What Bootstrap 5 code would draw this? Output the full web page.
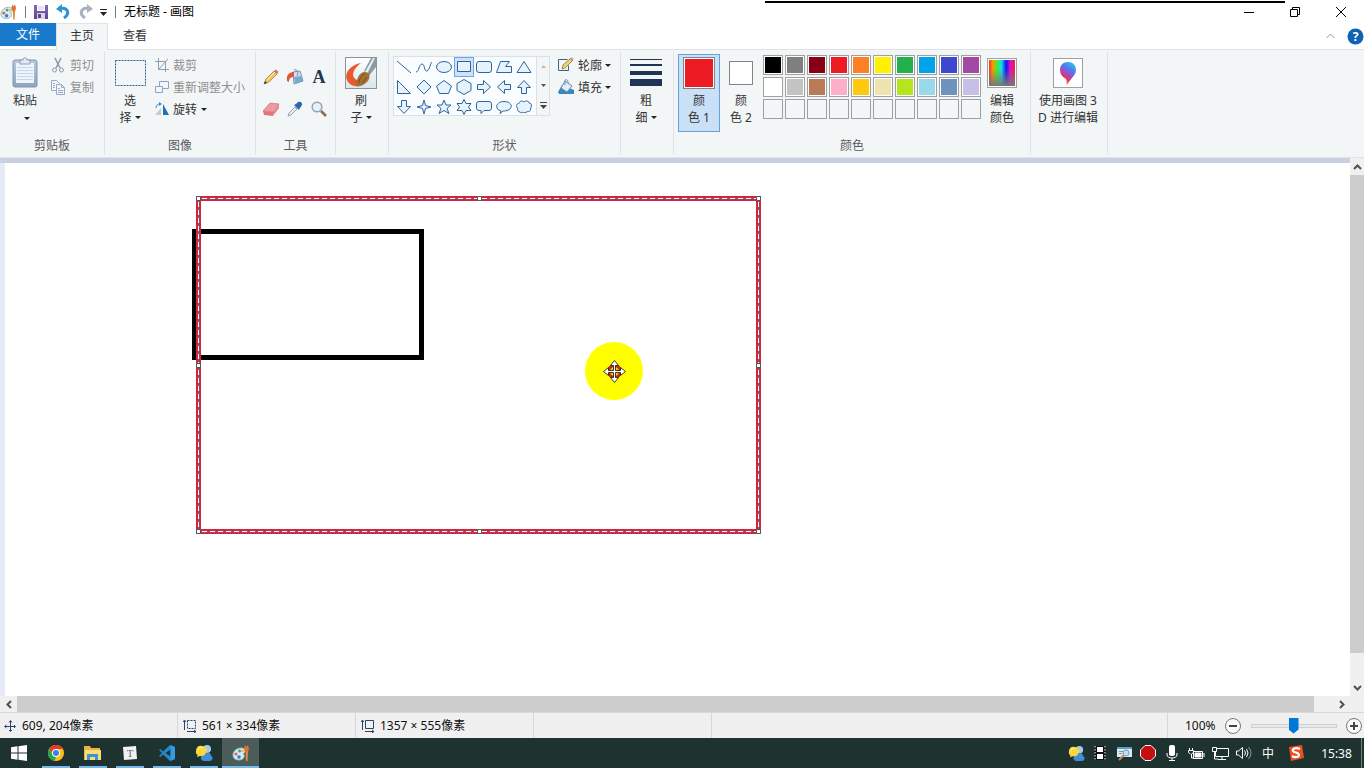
<!DOCTYPE html>
<html lang="zh-CN">
<head>
<meta charset="utf-8">
<meta name="viewport" content="width=device-width, initial-scale=1">
<title>无标题 - 画图</title>
<link rel="stylesheet" href="https://cdn.jsdelivr.net/npm/bootstrap@5.3.0/dist/css/bootstrap.min.css">
<style>
  body { font: 12px/17px "Noto Sans", "Noto Sans CJK SC", sans-serif; color: #333; background: #fff; }
  button, input { font: inherit; color: inherit; }
  button { background: none; border: 0; padding: 0; }
  svg { display: block; flex: none; }
  .title-row { height: 23px; color: #000; }
  .quick { width: 22px; height: 22px; display: flex; align-items: center; justify-content: center; }
  .bar-sep { width: 1px; height: 12px; background: #777; }
  .win-btn { width: 46px; height: 22px; display: flex; align-items: center; justify-content: center; }
  .top-line { position: absolute; top: 1px; right: 79px; width: 520px; height: 2px; background: #000; }
  .tab-row { height: 27px; border-bottom: 1px solid #dfe3e6; }
  .tab-row .nav-link { color: #333; padding: 4px 0 0; border-radius: 0; text-align: center; height: 27px; }
  .tab-row .file-tab { width: 56px; height: 23px; padding-top: 3px; background: #1979ca; color: #fff; }
  .tab-row .home-tab { width: 52px; background: #f3f6f7; border: 1px solid #dfe3e6; border-bottom: 0; padding-top: 3px; }
  .tab-row .view-tab { width: 54px; }
  .ribbon { height: 108px; background: #f3f6f7; border-bottom: 1px solid #dfe3e6; }
  .group { padding: 4px 0 3px; border-right: 1px solid #e1e5e9; border-image: linear-gradient(#f3f6f7 2px, #dfe3e8 3px, #dfe3e8 103px, #f3f6f7 104px) 1; }
  .group-name { text-align: center; color: #5a5a5a; height: 17px; }
  .g-clip { width: 105px; } .g-image { width: 151px; } .g-tools { width: 80px; } .g-brush { width: 53px; }
  .g-shapes { width: 232px; } .g-size { width: 53px; } .g-color { width: 357px; } .g-3d { width: 77px; }
  .big { width: 42px; height: 78px; border: 1px solid transparent; padding-top: 2px; display: flex; flex-direction: column; align-items: center; flex: none; }
  .big .pic { height: 32px; margin-bottom: 3px; display: flex; align-items: center; justify-content: center; }
  .big.picked { background: #c9e0f7; border-color: #62a2e4; }
  .big.wide { width: 66px; }
  .line-btn { height: 22px; display: flex; align-items: center; gap: 4px; white-space: nowrap; }
  .line-btn:disabled { color: #8f8f8f; }
  .caret { display: inline-block; border: 3px solid transparent; border-top-color: #222; border-bottom: 0; vertical-align: 3px; margin-left: 3px; }
  .tool-grid { display: grid; grid-template-columns: repeat(3, 24px); grid-auto-rows: 32px; padding: 7px 0 0 3px; }
  .tool-grid button { display: flex; align-items: center; justify-content: center; }
  .letter { font: 700 18px/24px "Liberation Serif", serif; color: #25364f; }
  .gallery { border: 1px solid #d9e0e8; background: #fafdff; height: 60px; margin-top: 2px; }
  .shape-grid { display: grid; grid-template-columns: repeat(7, 20px); grid-auto-rows: 20px; height: 58px; width: 142px; }
  .shape-grid button { height: 20px; display: flex; align-items: center; justify-content: center; }
  .shape-grid button.chosen { background: #cde2f8; border: 1px solid #6da6e0; }
  .shape-grid svg { fill: #e6f3fc; stroke: #2f659c; }
  .gallery-nav { width: 13px; border-left: 1px solid #d9e0e8; background: #f3f6f7; }
  .gallery-nav button { flex: 1; display: flex; align-items: center; justify-content: center; width: 100%; }
  .swatch-lg { width: 32px; height: 32px; border: 1px solid #848484; background: #ed1c24; box-shadow: inset 0 0 0 1px #fff; }
  .swatch-md { width: 24px; height: 24px; border: 1px solid #848484; background: #fff; }
  .palette { display: grid; grid-template-columns: repeat(10, 20px); grid-auto-rows: 20px; gap: 2px; padding: 1px 0 0 1px; }
  .palette button { border: 1px solid #a0a0a0; }
  .palette button.filled { box-shadow: inset 0 0 0 1px #fff; }
  .framed { width: 30px; height: 30px; border: 1px solid #a0a0a0; padding: 1px; background: #fff; }
  .desk-top { height: 5px; background: #c8d0e2; }
  .desk { border-left: 5px solid #e6eaf6; background: #fff; overflow: hidden; }
  .v-scroll { width: 14px; background: #f0f0f0; }
  .h-scroll { height: 16px; background: #f0f0f0; padding-right: 14px; }
  .scroll-end { width: 17px; height: 16px; display: flex; align-items: center; justify-content: center; }
  .v-scroll .scroll-end { width: 14px; height: 17px; }
  .thumb { background: #cdcdcd; }
  .v-scroll .thumb { margin-bottom: 26px; }
  .h-scroll .thumb { margin-right: 19px; }
  .status { height: 26px; background: #f0f0f0; border-top: 1px solid #d9d9d9; color: #111; }
  .status-cell { width: 178px; padding-left: 4px; border-right: 1px solid #d7d7d7; gap: 4px; }
  .status-cell + .status-cell { padding-left: 5px; gap: 5px; }
  .zoom-area { width: 197px; border-left: 1px solid #d7d7d7; padding-left: 17px; padding-right: 2px; }
  .zoom-slider { appearance: none; -webkit-appearance: none; width: 86px; height: 18px; background: none; margin: 0; }
  .zoom-slider::-webkit-slider-runnable-track { height: 4px; border: 1px solid #d0d0d0; background: #e9e9e9; }
  .zoom-slider::-webkit-slider-thumb { -webkit-appearance: none; width: 10px; height: 16px; margin-top: -7px; background: #0078d7; clip-path: polygon(0 0, 100% 0, 100% 75%, 50% 100%, 0 75%); }
  .taskbar { height: 30px; background: #1e332f; color: #fff; }
  .task { width: 37px; height: 30px; display: flex; align-items: center; justify-content: center; }
  .task.running { background: linear-gradient(#76b9ed, #76b9ed) center bottom / 28px 2px no-repeat; }
  .task.current { background: linear-gradient(#76b9ed, #76b9ed) center bottom / 37px 2px no-repeat #4b5c59; }
  .tray { width: 24px; height: 30px; display: flex; align-items: center; justify-content: center; }
  .tray-wide { width: 32px; }
  .clock { width: 49px; }
  .show-desktop { width: 3px; border-left: 1px solid #75827f; }
</style>
</head>
<body class="vh-100 d-flex flex-column overflow-hidden">

<svg width="0" height="0" class="position-absolute" aria-hidden="true">
  <defs>
    <linearGradient id="gPaper" x2="0" y2="1"><stop offset="0" stop-color="#b9c9de"/><stop offset="1" stop-color="#8fa3bf"/></linearGradient>
    <linearGradient id="gRainbow"><stop offset="0" stop-color="#e33"/><stop offset=".15" stop-color="#f90"/><stop offset=".3" stop-color="#4e2"/><stop offset=".48" stop-color="#1de"/><stop offset=".66" stop-color="#11e"/><stop offset=".82" stop-color="#d1c"/><stop offset="1" stop-color="#e23"/></linearGradient>
    <linearGradient id="gGrey" x2="0" y2="1"><stop offset=".35" stop-color="#777" stop-opacity="0"/><stop offset="1" stop-color="#777"/></linearGradient>
    <linearGradient id="gDrop" x1=".8" x2=".3" y2="1"><stop offset="0" stop-color="#29c8f5"/><stop offset=".35" stop-color="#5577ec"/><stop offset=".55" stop-color="#a04cc8"/><stop offset=".72" stop-color="#e0355e"/><stop offset="1" stop-color="#ff9a2e"/></linearGradient>
    <linearGradient id="gDisk" x2="0" y2="1"><stop offset="0" stop-color="#8769b5"/><stop offset="1" stop-color="#5c4594"/></linearGradient>
    <linearGradient id="gPicture" x2="0" y2="1"><stop offset="0" stop-color="#fff"/><stop offset="1" stop-color="#d9e6ec"/></linearGradient>
    <symbol id="paintApp" viewBox="0 0 18 18">
      <path d="M1 11c0-4 4-7 8-7 3 0 5 2 4 4-1 1-2 1-1 3 1 3-2 5-5 5-4 0-6-2-6-5z" fill="#d6edf4" stroke="#8db8c8"/>
      <circle cx="4" cy="10" r="1.600" fill="#e8604c"/><circle cx="7.500" cy="7" r="1.500" fill="#4aa35a"/><circle cx="7" cy="13" r="1.800" fill="#3b78c4"/><circle cx="10.500" cy="7" r="1.300" fill="#f0b83c"/>
      <path d="M13.500 8h2.500l-.5 9h-1.500z" fill="#e88a3a"/><path d="M12 5l1-4 1.500 2L16 1l1 4-1 3h-3z" fill="#d9763a"/>
    </symbol>
    <symbol id="weather" viewBox="0 0 18 18">
      <circle cx="12" cy="5" r="4" fill="#a5cdea"/><path d="M7 16c-3-2 0-6 3-5 1-3 6-3 6 1 3 1 1 5-1 5H8z" fill="#3f8fd6"/><path d="M1 7c0-4 3-6 6-5 4 0 6 4 4 7-1 3-4 3-6 3l-3 1 .6-2C1 10 .5 8 1 7z" fill="#fbd83f"/><path d="M3 6c1-3 3-3 5-2" stroke="#fff3a8" fill="none"/>
    </symbol>
  </defs>
</svg>

<header class="title-row d-flex align-items-center position-relative flex-shrink-0">
  <div class="top-line"></div>
  <svg width="17" height="18" class="me-1"><use href="#paintApp"/></svg>
  <span class="bar-sep ms-1"></span>
  <div class="d-flex ps-1">
    <button class="quick" aria-label="保存"><svg width="14" height="14"><path d="M0 0h14v14H0z" fill="url(#gDisk)"/><path d="M3 0h8v6H3z" fill="#fff"/><path d="M3 8h8v6H3z" fill="#d7d1e6"/><path d="M4 9h3v4H4z" fill="#5d4a8f"/><path d="M4 2h6M4 4h6" stroke="#cfc7e0"/></svg></button>
    <button class="quick" aria-label="撤消"><svg width="15" height="15" fill="none"><path d="M3 5c8-3 12 4 5 9" stroke="#2d93d6" stroke-width="3"/><path d="M0 5l6-5v9z" fill="#2d93d6"/></svg></button>
    <button class="quick" aria-label="重做"><svg width="15" height="15" fill="none"><path d="M12 5C4 2 0 9 7 14" stroke="#a9b3bf" stroke-width="3"/><path d="M15 5L9 0v9z" fill="#a9b3bf"/></svg></button>
  </div>
  <button class="ps-1 pe-2" aria-label="自定义快速访问工具栏"><svg width="7" height="8"><path d="M0 1.500h7" stroke="#222"/><path d="M0 4h7L3.500 8z" fill="#222"/></svg></button>
  <span class="bar-sep"></span>
  <span class="ms-2">无标题 - 画图</span>
  <div class="ms-auto d-flex">
    <button class="win-btn" aria-label="最小化"><svg width="10" height="10"><path d="M0 5.500h10" stroke="#000"/></svg></button>
    <button class="win-btn" aria-label="还原"><svg width="10" height="10" fill="none" stroke="#000"><path d="M.5 2.500h7v7h-7zM2.500 2.500v-2h7v7h-2"/></svg></button>
    <button class="win-btn" aria-label="关闭"><svg width="10" height="10" stroke="#000"><path d="M0 0l10 10M10 0L0 10"/></svg></button>
  </div>
</header>

<nav class="nav tab-row flex-shrink-0 flex-nowrap">
  <a class="nav-link file-tab" href="#file">文件</a>
  <a class="nav-link home-tab" href="#home" aria-current="page">主页</a>
  <a class="nav-link view-tab" href="#view">查看</a>
  <div class="ms-auto d-flex align-items-center gap-1">
    <button class="px-1 me-1" aria-label="折叠功能区"><svg width="9" height="6" fill="none" stroke="#999"><path d="M.5 5l4-4 4 4"/></svg></button>
    <button aria-label="帮助"><svg width="17" height="17" viewBox="0 0 17 17"><circle cx="8.500" cy="8.500" r="8" fill="#0f62b4"/><text x="8.500" y="13" font-size="12" font-weight="700" fill="#fff" text-anchor="middle">?</text></svg></button>
  </div>
</nav>

<section class="ribbon d-flex flex-shrink-0">
  <div class="group g-clip d-flex flex-column">
    <div class="d-flex flex-fill">
      <button class="big ms-1">
        <span class="pic"><svg width="26" height="32" viewBox="0 0 26 32"><rect x="1" y="3" width="24" height="27" rx="2" fill="url(#gPaper)" stroke="#8296b2"/><path d="M4 6h18v20H4z" fill="#eef4fb"/><path d="M5 10.500h16M5 13.500h16M5 16.500h16M5 19.500h16M5 22.500h16" stroke="#c6d5e8"/><path d="M8 3h3c0-3 4-3 4 0h3v4H8z" fill="#e4e9f0" stroke="#8c9db5"/></svg></span>
        <span>粘贴</span><span class="caret mt-2"></span>
      </button>
      <div class="ms-1">
        <button class="line-btn" disabled><svg width="16" height="16" fill="none" stroke="#8d9aad"><path d="M5 1l5 10M11 1L6 11" stroke-width="1.600"/><circle cx="4.500" cy="13" r="2"/><circle cx="11.500" cy="13" r="2"/></svg>剪切</button>
        <button class="line-btn" disabled><svg width="16" height="16" fill="#f3f8fd" stroke="#9aacc4"><path d="M1.500 1.500h5l3 3v7h-8z"/><path d="M6.500 5.500h5l3 3v7h-8zM11.500 5.500v3h3"/><path d="M3 4.500h2M3 6.500h2M3 8.500h2M8 9.500h2M8 11.500h5M8 13.500h5" /></svg>复制</button>
      </div>
    </div>
    <div class="group-name">剪贴板</div>
  </div>

  <div class="group g-image d-flex flex-column">
    <div class="d-flex flex-fill">
      <button class="big ms-1">
        <span class="pic"><svg width="31" height="26"><rect x=".5" y=".5" width="30" height="25" fill="none" stroke="#2c5c94" stroke-dasharray="2 1"/></svg></span>
        <span>选<br>择<i class="caret"></i></span>
      </button>
      <div class="ms-1">
        <button class="line-btn" disabled><svg width="14" height="14" fill="none" stroke="#8f9db0"><path d="M3.500 0v11.500H14M0 3.500h10.500V14M4 11l9-10"/></svg>裁剪</button>
        <button class="line-btn" disabled><svg width="14" height="14" fill="#f2f7fc" stroke="#8fa4c0"><path d="M4.500 1.500h9v7h-9z"/><path d="M.5 6.500h7v6h-7z"/></svg>重新调整大小</button>
        <button class="line-btn"><svg width="14" height="14"><path d="M0 13l6-7v7z" fill="#c7cbd0"/><path d="M8 2l6 11H8z" fill="#2273b5"/><path d="M1 6c0-3 2-4 4-4" fill="none" stroke="#3a89c9"/><path d="M4 0l3 2-3 2z" fill="#3a89c9"/></svg><span>旋转<i class="caret ms-1"></i></span></button>
      </div>
    </div>
    <div class="group-name">图像</div>
  </div>

  <div class="group g-tools d-flex flex-column">
    <div class="tool-grid flex-fill">
      <button aria-label="铅笔"><svg width="16" height="16"><path d="M1 15l2-5 8-8 3 3-8 8z" fill="#f1c65c" stroke="#a8824a" stroke-width=".8"/><path d="M11 2l2-1.500L15.500 3 14 5z" fill="#d66b76"/><path d="M1 15l1-3 2 2z" fill="#333"/><path d="M4 11l8-8" stroke="#fff0b3"/></svg></button>
      <button aria-label="用颜色填充"><svg width="18" height="16"><path d="M7 3l7-1 3 10-9 3z" fill="#cfe2f1" stroke="#7793b2"/><path d="M8 8l8-1 1 5-8 3z" fill="#79a9d3"/><path d="M8 3C4 3 0 5 1 12l2 1c0-4 2-5 5-5z" fill="#e35534"/><path d="M8 1c3-1 5 2 3 6" fill="none" stroke="#7d8c9e"/></svg></button>
      <button class="letter" aria-label="文本">A</button>
      <button aria-label="橡皮擦"><svg width="18" height="16"><path d="M1 10l7-8 9 1-5 8z" fill="#f19a9d" stroke="#cc7379" stroke-width=".7"/><path d="M1 10l11 1-1 4-9-1z" fill="#e0757b"/><path d="M12 11l5-8v4l-6 8z" fill="#e98489"/></svg></button>
      <button aria-label="颜色选取器"><svg width="16" height="16"><path d="M1 15l1-3 6-6 2 2-6 6z" fill="#e3edf5" stroke="#7d93ab" stroke-width=".8"/><path d="M7 4l5 5 1-2 2-3c1-2-2-4-4-3L9 3z" fill="#2b68ad"/></svg></button>
      <button aria-label="放大镜"><svg width="16" height="16"><path d="M10 10l5 5" stroke="#8b6a55" stroke-width="2.500"/><circle cx="6" cy="6" r="4.800" fill="#e4f1fb" stroke="#96a3b1" stroke-width="1.500"/></svg></button>
    </div>
    <div class="group-name">工具</div>
  </div>

  <div class="group g-brush">
    <button class="big ms-1">
      <span class="pic"><svg width="32" height="32"><rect x=".5" y=".5" width="31" height="31" fill="url(#gPicture)" stroke="#8d9399"/><path d="M16 6C4 8-2 18 3 25c3 4 8 5 12 4l2-5C8 24 3 16 16 6z" fill="#e9592b"/><path d="M26 1h5v9l-7 9-5-5z" fill="#8c9aa6"/><path d="M28 1h2L22 17l-2-2z" fill="#e8eef2"/><path d="M11 29c0-6 3-14 9-14 5 0 6 6 2 10-3 3-7 5-11 4z" fill="#a57036"/><path d="M14 26c0-4 3-8 6-9M17 26l5-6" stroke="#744a20" fill="none"/></svg></span>
      <span>刷<br>子<i class="caret"></i></span>
    </button>
  </div>

  <div class="group g-shapes d-flex flex-column">
    <div class="d-flex flex-fill ps-1">
      <div class="gallery d-flex">
        <div class="shape-grid" id="shapes"></div>
        <div class="gallery-nav d-flex flex-column">
          <button aria-label="上一行"><svg width="5" height="3"><path d="M0 3h5L2.500 0z" fill="#bbb"/></svg></button>
          <button aria-label="下一行"><svg width="5" height="3"><path d="M0 0h5L2.500 3z" fill="#555"/></svg></button>
          <button aria-label="更多形状"><svg width="7" height="7"><path d="M0 .5h7" stroke="#444"/><path d="M0 3h7L3.500 7z" fill="#444"/></svg></button>
        </div>
      </div>
      <div class="ms-2">
        <button class="line-btn"><svg width="16" height="16"><path d="M.5 2.500h9M.5 2.500v11h10v-5" fill="none" stroke="#39668f"/><path d="M4 12l1-4 8-7 2 2-8 8z" fill="#f3d26f" stroke="#8a6d38" stroke-width=".8"/><path d="M12 2l2-1.500L15.500 2 14 4z" fill="#d98a84"/></svg><span>轮廓<i class="caret"></i></span></button>
        <button class="line-btn"><svg width="16" height="16"><path d="M0 13l4-7 12 5v4H1z" fill="#3b86bb"/><path d="M7 2l7 5-5 6-6-4z" fill="#e3eef6" stroke="#6d8cab"/><path d="M7 6V1c2-1 3 0 3 3" fill="none" stroke="#6d8cab"/></svg><span>填充<i class="caret"></i></span></button>
      </div>
    </div>
    <div class="group-name">形状</div>
  </div>

  <div class="group g-size">
    <button class="big ms-1">
      <span class="pic"><svg width="32" height="30" fill="#1f3556"><path d="M0 1h32v1H0zM0 6h32v2H0zM0 13h32v4H0zM0 21h32v7H0z"/></svg></span>
      <span>粗<br>细<i class="caret"></i></span>
    </button>
  </div>

  <div class="group g-color d-flex flex-column">
    <div class="d-flex flex-fill">
      <button class="big picked ms-1" aria-pressed="true"><span class="pic"><span class="swatch-lg"></span></span><span>颜<br>色 1</span></button>
      <button class="big"><span class="pic"><span class="swatch-md"></span></span><span>颜<br>色 2</span></button>
      <div class="palette" id="palette" role="group" aria-label="调色板"></div>
      <button class="big"><span class="pic"><span class="framed"><svg width="26" height="26"><path d="M0 0h26v26H0z" fill="url(#gRainbow)"/><path d="M0 0h26v26H0z" fill="url(#gGrey)"/></svg></span></span><span>编辑<br>颜色</span></button>
    </div>
    <div class="group-name">颜色</div>
  </div>

  <div class="group g-3d">
    <button class="big wide ms-1">
      <span class="pic"><span class="framed"><svg width="26" height="26"><path d="M13 2c5 0 8 3 8 8 0 5-5 8-9 15-1-2 0-4-1-6C7 17 5 14 5 10c0-5 3-8 8-8z" fill="url(#gDrop)"/></svg></span></span>
      <span class="text-nowrap">使用画图 3<br>D 进行编辑</span>
    </button>
  </div>
</section>

<main class="d-flex flex-fill" style="min-height:0">
  <div class="flex-fill d-flex flex-column" style="min-width:0">
    <div class="desk-top flex-shrink-0"></div>
    <div class="desk flex-fill">
      <svg width="1345" height="533" viewBox="5 163 1345 533" role="img" aria-label="画布">
        <g fill="none">
          <rect x="194.500" y="231.500" width="227" height="126" stroke="#000" stroke-width="5"/>
          <g shape-rendering="crispEdges">
            <rect x="198.500" y="198.500" width="560" height="333" stroke="#d3263a" stroke-width="5"/>
            <rect x="199.500" y="199.500" width="560" height="333" stroke="#a83c58"/>
            <rect x="198.500" y="198.500" width="560" height="333" stroke="#8f4a70"/>
            <path d="M202 198.500h556M202 531.500h556M198.500 202v329M758.500 202v329" stroke="#fff" stroke-dasharray="5 3"/>
          </g>
        </g>
        <g fill="#fff" stroke="#555"><path d="M196.500 196.500h4v4h-4zM477.500 196.500h4v4h-4zM756.500 196.500h4v4h-4zM196.500 363.500h4v4h-4zM756.500 363.500h4v4h-4zM196.500 529.500h4v4h-4zM477.500 529.500h4v4h-4zM756.500 529.500h4v4h-4z"/></g>
        <circle cx="614" cy="371" r="29" fill="#ff0"/>
        <circle cx="614.500" cy="371.500" r="6" fill="#ffc31a" stroke="#c22a10" stroke-width="3"/>
        <path d="M614.500 360.500l4 5h-3v5h5v-3l5 4-5 4v-3h-5v5h3l-4 5-4-5h3v-5h-5v3l-5-4 5-4v3h5v-5h-3z" fill="#fff" stroke="#222" stroke-width=".9"/>
      </svg>
    </div>
  </div>
  <div class="v-scroll d-flex flex-column flex-shrink-0">
    <button class="scroll-end" aria-label="向上滚动"><svg width="9" height="6" fill="none" stroke="#505050" stroke-width="2"><path d="M1 5l3.500-3.500L8 5"/></svg></button>
    <div class="thumb flex-fill"></div>
    <button class="scroll-end" aria-label="向下滚动"><svg width="9" height="6" fill="none" stroke="#505050" stroke-width="2"><path d="M1 1l3.500 3.500L8 1"/></svg></button>
  </div>
</main>
<div class="h-scroll d-flex flex-shrink-0">
  <button class="scroll-end" aria-label="向左滚动"><svg width="6" height="9" fill="none" stroke="#505050" stroke-width="2"><path d="M5 1L1.500 4.500 5 8"/></svg></button>
  <div class="thumb flex-fill"></div>
  <button class="scroll-end" aria-label="向右滚动"><svg width="6" height="9" fill="none" stroke="#505050" stroke-width="2"><path d="M1 1l3.500 3.500L1 8"/></svg></button>
</div>

<section class="status d-flex flex-shrink-0">
  <div class="status-cell d-flex align-items-center"><svg width="14" height="12" fill="none" stroke="#2b4566"><path d="M1 6.500h10M6.500 1v10M5 2.500l1.500-2L8 2.500M5 10l1.500 1.500L8 10M2.500 5L.5 6.500l2 1.500M10 5l1.500 1.500L10 8"/></svg><span>609, 204像素</span></div>
  <div class="status-cell d-flex align-items-center"><svg width="14" height="14" fill="none" stroke="#2b4566"><path d="M1.500 2v9M0 3l1.500-2L3 3M4 12.500h9M11 11l2 1.500-2 1.500"/><path d="M4.500 1.500h8v8h-8z" stroke-dasharray="2 1"/></svg><span>561 × 334像素</span></div>
  <div class="status-cell d-flex align-items-center"><svg width="14" height="14" fill="none" stroke="#2b4566"><path d="M1.500 2v9M0 3l1.500-2L3 3M4 12.500h9M11 11l2 1.500-2 1.500M4.500 1.500h8v8h-8z"/></svg><span>1357 × 555像素</span></div>
  <div class="status-cell"></div>
  <div class="zoom-area ms-auto d-flex align-items-center justify-content-between">
    <label for="zoom">100%</label>
    <button class="ms-1" aria-label="缩小"><svg width="16" height="16" fill="#fafafa" stroke="#777"><circle cx="8" cy="8" r="7.500"/><path d="M4 8h8" stroke="#444" stroke-width="2"/></svg></button>
    <input class="zoom-slider mx-1" id="zoom" type="range" min="0" max="100" value="50">
    <button aria-label="放大"><svg width="16" height="16" fill="#fafafa" stroke="#777"><circle cx="8" cy="8" r="7.500"/><path d="M4 8h8M8 4v8" stroke="#444" stroke-width="2"/></svg></button>
  </div>
</section>

<footer class="taskbar d-flex flex-shrink-0">
  <button class="task" aria-label="开始"><svg width="16" height="16" fill="#fff"><path d="M0 2.200L6.500 1.300v6.200H0zM7.500 1.200L16 0v7.500H7.500zM0 8.500h6.500v6.200L0 13.800zM7.500 8.500H16V16l-8.500-1.200z"/></svg></button>
  <button class="task running" aria-label="Chrome"><svg width="16" height="16"><circle cx="8" cy="8" r="8" fill="#fbc116"/><path d="M1 4a8 8 0 0 1 14 0H8L5 9.500z" fill="#e33b2e"/><path d="M1 4l4 6 3 2-1.500 4A8 8 0 0 1 1 4z" fill="#2ba24c"/><circle cx="8" cy="8" r="4" fill="#fff"/><circle cx="8" cy="8" r="3" fill="#3a7ee8"/></svg></button>
  <button class="task running" aria-label="文件资源管理器"><svg width="17" height="16"><path d="M0 1h6l1 2h9v12H0z" fill="#e9b43c"/><path d="M1 5h16v10H1z" fill="#fbdc7c"/><path d="M3 9h11v6h-3v-3H6v3H3z" fill="#3e93d3"/></svg></button>
  <button class="task running" aria-label="Typora"><svg width="16" height="16"><path d="M1 2l13-1 1 13-13 1z" fill="#f1f1f1"/><text x="8" y="12" font-family="Liberation Serif, serif" font-size="11" fill="#666" text-anchor="middle">T</text></svg></button>
  <button class="task running" aria-label="Visual Studio Code"><svg width="16" height="16"><path d="M11 0l5 2v12l-5 2-7-6.500L1.500 12 0 11l3-3-3-3 1.500-1L4 6.500zM11.500 4.500L6.500 8l5 3.500z" fill="#2489ca" fill-rule="evenodd"/><path d="M11.500 0L16 2v12l-4.500 2z" fill="#38a4ec" opacity=".7"/></svg></button>
  <button class="task running" aria-label="消息"><svg width="18" height="18"><use href="#weather"/></svg></button>
  <button class="task current" aria-label="画图"><svg width="18" height="18"><use href="#paintApp"/></svg></button>
  <div class="ms-auto d-flex">
    <button class="tray" aria-label="消息"><svg width="17" height="17"><use href="#weather"/></svg></button>
    <button class="tray" aria-label="视频"><svg width="12" height="14"><path d="M0 0h12v14H0z" fill="#111"/><path d="M3 1h6v5H3zM3 8h6v5H3z" fill="#fff"/><path d="M1 0v14M11 0v14" stroke="#fff" stroke-dasharray="1.500 1.500"/></svg></button>
    <button class="tray" aria-label="搜索窗口"><svg width="15" height="15"><path d="M0 1h15v10H0z" fill="#dce8f2"/><path d="M0 1h15v2H0z" fill="#5a9bd0"/><path d="M2 5.500h4M2 7.500h3" stroke="#7998b5"/><circle cx="9" cy="7" r="3" fill="#bfe0f2" stroke="#8899a8"/><path d="M7 9l-5 5" stroke="#b98b60" stroke-width="2"/></svg></button>
    <button class="tray" aria-label="录制"><svg width="16" height="16"><path d="M5 .5h6L15.500 5v6L11 15.500H5L.5 11V5z" fill="#c50e12" stroke="#fff"/></svg></button>
    <button class="tray" aria-label="麦克风"><svg width="12" height="16"><rect x="3" y="0" width="6" height="11" rx="2" fill="#fff"/><path d="M1 8v2c0 4 10 4 10 0V8M6 13v3M3 15.500h6" fill="none" stroke="#fff"/></svg></button>
    <button class="tray" aria-label="电源"><svg width="17" height="13" fill="none" stroke="#fff"><path d="M5.500 4.500h9v7h-9zM16 6v4"/><path d="M7 6h6v4H7z" fill="#fff"/><path d="M1.500 1v3M4.500 1v3M.5 3.500h5v2l-2 1.500v4h2M.5 3.500v2l2 1.500"/></svg></button>
    <button class="tray" aria-label="网络"><svg width="17" height="14" fill="none" stroke="#fff"><path d="M4 2.500h12.500v8H3.500V6M10 10.500v3M6 13.500h8M.5 1.500h4v4h-4zM2.500 5v8H6"/></svg></button>
    <button class="tray" aria-label="音量"><svg width="16" height="14" fill="none" stroke="#fff"><path d="M.5 5h2l4-3.500v11L2.500 9h-2z"/><path d="M8.500 4.500q2 2.500 0 5M10.500 3q3 4 0 8"/><path d="M12.500 1q5 6 0 12" stroke="#8a9693"/></svg></button>
    <button class="tray" aria-label="输入法">中</button>
    <button class="tray tray-wide" aria-label="搜狗输入法"><svg width="16" height="16"><path d="M1 2l13-2 2 13-13 3z" fill="#ef4e22"/><path d="M12 4C7 2 4 4 5 6c1 2 6 1 6 4 0 2-4 3-7 1" fill="none" stroke="#fff" stroke-width="2.200"/></svg></button>
    <time class="clock d-flex align-items-center justify-content-center">15:38</time>
    <div class="show-desktop"></div>
  </div>
</footer>

<script src="https://cdn.jsdelivr.net/npm/bootstrap@5.3.0/dist/js/bootstrap.bundle.min.js"></script>
<script>
  // Shape gallery, row by row: [name, outline]
  const shapes = [
    ['直线', 'M1 2l14 12'],
    ['曲线', 'M0 13C3 13 3 5 6 5s2 8 5 7 3-8 5-9'],
    ['椭圆形', 'M.5 8a7.500 5.500 0 1 0 15 0 7.500 5.500 0 1 0-15 0'],
    ['矩形', 'M1.500 2.500h13v10h-13z'],
    ['圆角矩形', 'M3 2.500h10q2.500 0 2.500 2.500v6q0 2.500-2.500 2.500H3Q.5 13.500.5 11V5Q.5 2.500 3 2.500z'],
    ['多边形', 'M4.500 2.500h9l-4 5h6v6H.5z'],
    ['三角形', 'M8 2.500l7 11H1z'],
    ['直角三角形', 'M1.500 1.500l13 13h-13z'],
    ['菱形', 'M8 1l7 7-7 7-7-7z'],
    ['五边形', 'M8 1.500l7.500 5.500-3 7.500h-9L.5 7z'],
    ['六边形', 'M8 .5l7 4v7l-7 4-7-4v-7z'],
    ['右箭头', 'M1.500 5.500h6v-4L14.500 8l-7 6.500v-4h-6z'],
    ['左箭头', 'M14.500 5.500h-6v-4L1.500 8l7 6.500v-4h6z'],
    ['上箭头', 'M5.500 14.500v-6h-4L8 1.500l6.500 7h-4v6z'],
    ['下箭头', 'M5.500 1.500v6h-4L8 14.500l6.500-7h-4v-6z'],
    ['四角星', 'M8 1l1.500 5.500L15 8 9.500 9.500 8 15 6.500 9.500 1 8l5.500-1.500z'],
    ['五角星', 'M8 1l2 5h5l-4 3.500 2 5-5-3-5 3 2-5L1 6h5z'],
    ['六角星', 'M8 .5l2 4h5L12.500 8l2.500 3.500h-5l-2 4-2-4H1L3.500 8 1 4.500h5z'],
    ['圆角矩形标注', 'M3 2.500h10q2.500 0 2.500 2.500v4q0 2.500-2.500 2.500H8l-3 3v-3H3Q.5 11.500.5 9V5Q.5 2.500 3 2.500z'],
    ['椭圆形标注', 'M5 12C-2 10 0 2.500 8 2.500s10 7 3 9c-2 .5-3 .5-4 .5l-3 2.500z'],
    ['云形标注', 'M4 13c-2 0-3-2-2-3.500C-1 8 1 4 3 4.500 4 1 7 2 8 3c2-2 5-1 5 1 3 0 3 4 1.500 5 1 3-2 4-3.500 3.500-1 2-4 1-4 .5-1 1-2 1-3 0z']
  ];
  document.getElementById('shapes').innerHTML = shapes.map(([name, d], i) =>
    `<button class="${i === 3 ? 'chosen' : ''}" aria-label="${name}"><svg width="16" height="16"><path d="${d}"${i < 2 ? ' fill="none"' : ''}/></svg></button>`).join('');

  const colors = ['#000000', '#7f7f7f', '#880015', '#ed1c24', '#ff7f27', '#fff200', '#22b14c', '#00a2e8', '#3f48cc', '#a349a4',
                  '#ffffff', '#c3c3c3', '#b97a57', '#ffaec9', '#ffc90e', '#efe4b0', '#b5e61d', '#99d9ea', '#7092be', '#c8bfe7'];
  document.getElementById('palette').innerHTML = Array.from({ length: 30 }, (_, i) => colors[i]
    ? `<button class="filled" style="background:${colors[i]}" aria-label="${colors[i]}"></button>`
    : '<button aria-label="空"></button>').join('');
</script>
</body>
</html>
